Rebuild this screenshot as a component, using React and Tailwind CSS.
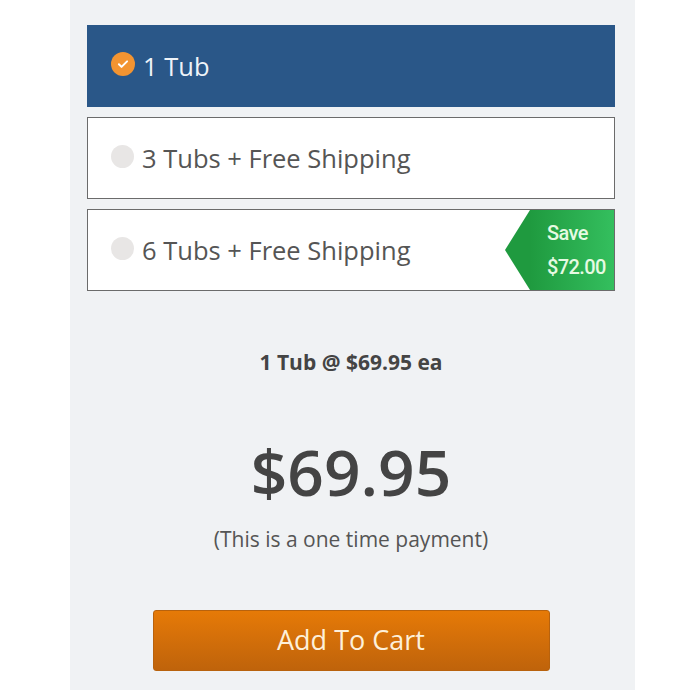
import React, { useState } from "react";

const options = [
  { id: 1, label: "1 Tub" },
  { id: 3, label: "3 Tubs + Free Shipping" },
  { id: 6, label: "6 Tubs + Free Shipping", save: "$72.00" },
];

const CheckDot = () => (
  <span className="flex h-[24px] w-[24px] items-center justify-center rounded-full bg-[#f39431]">
    <svg width="14" height="14" viewBox="0 0 24 24" fill="none">
      <path
        d="M5 12.5l4.5 4.5L19 7.5"
        stroke="#fff"
        strokeWidth="3.4"
        strokeLinecap="round"
        strokeLinejoin="round"
      />
    </svg>
  </span>
);

const EmptyDot = () => (
  <span className="block h-[23px] w-[23px] rounded-full bg-[#e8e6e5]" />
);

const SaveBadge = ({ amount }) => (
  <div className="absolute right-0 top-0 flex h-full">
    {/* arrow tip */}
    <div className="h-full w-[25px] bg-[#1f9a3f] [clip-path:polygon(100%_0,100%_100%,0_50%)]" />
    <div className="flex h-full w-[84px] flex-col justify-center bg-gradient-to-r from-[#1f9a3f] to-[#34bf5e] pl-[17px] font-['Roboto',sans-serif] text-[20px] font-medium leading-[34px] tracking-[-0.6px] text-[#e6fae2]">
      <span>Save</span>
      <span>{amount}</span>
    </div>
  </div>
);

const App = () => {
  const [selected, setSelected] = useState(1);

  return (
    <div className="min-h-[700px] bg-white font-['Open_Sans',sans-serif]">
      <div className="ml-[70px] flex h-[690px] w-[565px] flex-col bg-[#f0f2f4] pl-[17px] pr-[20px] pt-[25px]">
        {/* Options */}
        <div className="flex flex-col gap-[10px]">
          {options.map((opt) => {
            const active = selected === opt.id;
            return (
              <button
                key={opt.id}
                onClick={() => setSelected(opt.id)}
                className={`relative flex h-[82px] items-center overflow-hidden border pl-[23px] text-left text-[25.5px] ${
                  active
                    ? "border-[#2a5788] bg-[#2a5788] text-[#eef3f8]"
                    : "border-[#6b6b6b] bg-white text-[#555]"
                }`}
              >
                <span className="-mt-[4px] mr-[8px]">
                  {active ? <CheckDot /> : <EmptyDot />}
                </span>
                <span>{opt.label}</span>
                {opt.save && <SaveBadge amount={opt.save} />}
              </button>
            );
          })}
        </div>

        {/* Summary */}
        <div className="mt-[56px] text-center text-[21px] font-bold text-[#444]">
          1 Tub @ $69.95 ea
        </div>
        <div className="mt-[53px] text-center text-[64px] font-semibold leading-[80px] text-[#444]">
          $69.95
        </div>
        <div className="mt-[12px] text-center text-[21px] text-[#555]">
          (This is a one time payment)
        </div>

        <div className="mt-[55px] flex justify-center">
          <button className="h-[61px] w-[397px] rounded-[3px] border border-[#b8620d] bg-gradient-to-b from-[#e67a07] to-[#bf630b] text-[27px] text-[#fdf0da]">
            Add To Cart
          </button>
        </div>
      </div>
    </div>
  );
};

export default App;
